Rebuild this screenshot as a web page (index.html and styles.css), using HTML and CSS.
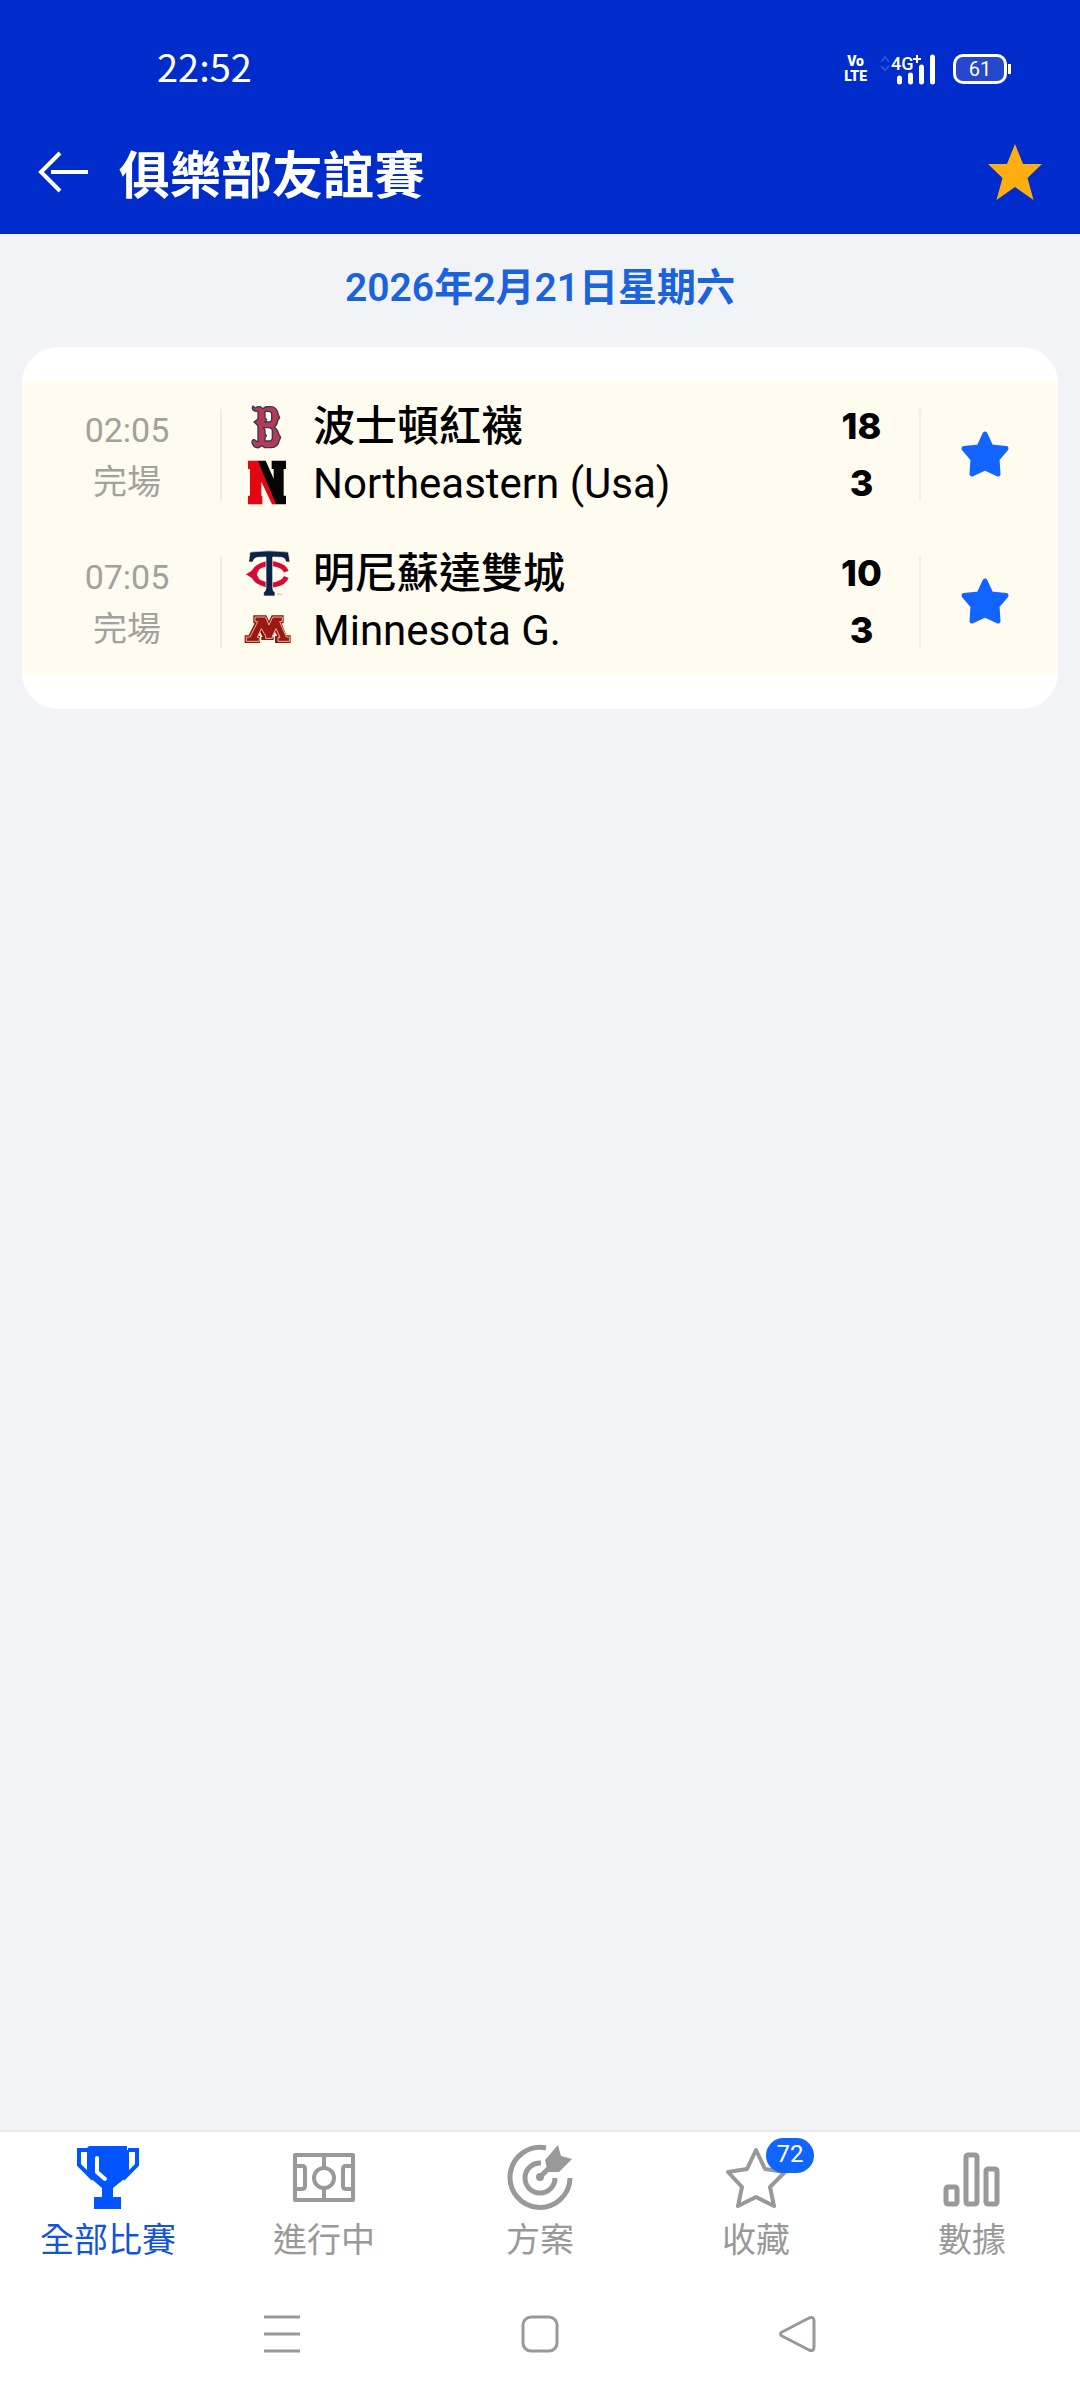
FILE: index.html
```
<!DOCTYPE html>
<html lang="zh-Hant">
<head>
    <meta charset="utf-8">
    <meta name="viewport" content="width=device-width, initial-scale=1">
    <title>俱樂部友誼賽</title>
    <link rel="stylesheet" href="styles.css">
</head>
<body>
    <header class="header">
        <div class="status-bar">
            <span class="clock">22:52</span>
            <div class="status-icons">
                <div class="volte"><span>Vo</span><span>LTE</span></div>
                <svg class="signal" width="60" height="32" viewBox="0 0 60 32">
                    <path d="M4 9l4-5 4 5M4 13l4 4 4-4" fill="none" stroke="#2a52d8" stroke-width="2"/>
                    <text x="14" y="17" class="signal-text">4G</text>
                    <path d="M36 6h8M40 2v8" stroke="#fff" stroke-width="2"/>
                    <path d="M22.500 25v4M33.500 22v7M44.500 14v15M55.500 4v25" stroke="#fff" stroke-width="5" stroke-linecap="round"/>
                </svg>
                <div class="battery">61</div>
            </div>
        </div>
        <div class="title-bar">
            <button class="icon-button" aria-label="返回">
                <svg width="52" height="44" viewBox="0 0 52 44">
                    <path d="M23 3L4 22l19 19M14 22h37" fill="none" stroke="#fff" stroke-width="4"/>
                </svg>
            </button>
            <h1>俱樂部友誼賽</h1>
            <button class="icon-button" aria-label="收藏賽事">
                <svg width="54" height="56" viewBox="0 0 54 56">
                    <path d="M27 0l8 20h19L39.500 34l6 22L27 43 8.500 56l6-22L0 20h19z" fill="#ffae12"/>
                </svg>
            </button>
        </div>
    </header>

    <main>
        <h2 class="date">2026年2月21日星期六</h2>

        <!-- 比賽列表 -->
        <div class="card">
            <div class="match">
                <div class="match-time">
                    <span>02:05</span>
                    <span>完場</span>
                </div>
                <div class="teams">
                    <div class="team">
                        <svg class="logo" viewBox="39 36 144 144">
                            <path d="M69 48c-4 6-2 14 5 15l10 1v22l-6 6-6 4 6 5 6 6v49c-5 0-7-6-12-7-6-1-7 7-5 12 3 8 10 13 19 12l10-6 8 6h20c12 0 22-8 23-20l5-11-6-10c-2-10-7-17-14-20 6-4 10-12 11-20l6-9-5-11c-1-13-10-22-22-22h-14l-9 6-8-6H84c-6 0-5 5-9 4z" fill="#b83a50" stroke="#33385c" stroke-width="4" stroke-linejoin="round"/>
                            <path d="M105 64h8c7 0 12 4 12 9v14c0 6-4 9-10 9h-10l5-7-5-6zM105 121l-4-8h13c8 0 13 4 13 10v20c0 7-5 10-12 10h-10v-10l4-6-4-6z" fill="#fffbef" stroke="#33385c" stroke-width="4"/>
                        </svg>
                        <span class="team-name">波士頓紅襪</span>
                    </div>
                    <div class="team">
                        <svg class="logo" viewBox="39 207 144 144">
                            <path d="M82 212h25l24 54v-29h-6v-25h43v25h-7v80h7v26h-32z" fill="#050505"/>
                            <path d="M54 212h29l55 131h-12L94 275v42h3v26H54v-26h6v-80h-6z" fill="#e30613"/>
                        </svg>
                        <span class="team-name">Northeastern (Usa)</span>
                    </div>
                </div>
                <div class="scores">
                    <span>18</span>
                    <span>3</span>
                </div>
                <button class="favorite" aria-label="取消收藏">
                    <svg width="50" height="50" viewBox="0 0 50 50">
                        <path d="M25 4l6 13 15 1.500L37 29l1 15-13-6-13 6 1-15-9-10.500L19 17z" fill="#1264ff" stroke="#1264ff" stroke-width="5" stroke-linejoin="round"/>
                    </svg>
                </button>
            </div>

            <div class="match">
                <div class="match-time">
                    <span>07:05</span>
                    <span>完場</span>
                </div>
                <div class="teams">
                    <div class="team">
                        <svg class="logo" viewBox="39 27 144 144">
                            <path d="M169 95A49 32 0 1 0 169 111" fill="none" stroke="#d50b35" stroke-width="15"/>
                            <path d="M48 103q18-9 32-27l6 16q-10 11 0 22l-6 16q-14-18-32-27z" fill="#d50b35"/>
                            <path d="M60 36q57-7 115 0l5 30h-12q-2-13-14-14l-26-1v93q0 10 7 13v11h-34v-11q7-3 7-13V51l-24 1q-13 1-16 14H56z" fill="#0b2347" stroke="#fffbef" stroke-width="2"/>
                            <path d="M141 161h6m-3 0v5m5 0v-5l3 3 3-3v5" fill="none" stroke="#777" stroke-width="1"/>
                        </svg>
                        <span class="team-name">明尼蘇達雙城</span>
                    </div>
                    <div class="team">
                        <svg class="logo" viewBox="39 198 144 144">
                            <path d="M70 226h39l8 17 8-17h36v24h-6l14 36h13v23h-47v-21h7l-7-13-8 16h4v9H94v-9h4l-8-16-7 13h7v21H44v-23h12l18-36h-4z" fill="#8c1212"/>
                            <path d="M75 231h32l10 24 11-24h29v14h-8l20 46h10v13h-35v-12h6l-12-26-11 22v7h-20v-7l-13-22-12 26h6v12H49v-13h11l23-46h-8z" fill="#9c1714" stroke="#e5b98b" stroke-width="3"/>
                        </svg>
                        <span class="team-name">Minnesota G.</span>
                    </div>
                </div>
                <div class="scores">
                    <span>10</span>
                    <span>3</span>
                </div>
                <button class="favorite" aria-label="取消收藏">
                    <svg width="50" height="50" viewBox="0 0 50 50">
                        <path d="M25 4l6 13 15 1.500L37 29l1 15-13-6-13 6 1-15-9-10.500L19 17z" fill="#1264ff" stroke="#1264ff" stroke-width="5" stroke-linejoin="round"/>
                    </svg>
                </button>
            </div>
        </div>
    </main>

    <footer class="footer">
        <nav class="tabs">
            <a href="#" class="tab active">
                <svg class="tab-icon" viewBox="0 0 64 64">
                    <path d="M12 4H3v15l14 14M52 4h9v15L47 33" fill="none" stroke="#0055ff" stroke-width="4"/>
                    <path d="M13 0h38v4h2v25l-16 13v9h8v12H18V51h8v-9L11 29V2z" fill="#0055ff"/>
                    <path d="M21 12v14l8 7" fill="none" stroke="#fff" stroke-width="4" stroke-linecap="round"/>
                </svg>
                <span>全部比賽</span>
            </a>
            <a href="#" class="tab">
                <svg class="tab-icon" viewBox="0 0 64 64" fill="none" stroke="#999" stroke-width="4" stroke-linejoin="round">
                    <path d="M3 9h58v45H3zM32 9v12M32 42v12M4 20h6q3 0 3 3v17q0 3-3 3H4M60 20h-6q-3 0-3 3v17q0 3 3 3h6"/>
                    <circle cx="32" cy="32" r="10"/>
                </svg>
                <span>進行中</span>
            </a>
            <a href="#" class="tab">
                <svg class="tab-icon" viewBox="0 0 64 64">
                    <path d="M38 2a30 30 0 1 0 24 30M33 17a15 15 0 1 0 14 15M31 32l17-17" fill="none" stroke="#999" stroke-width="5"/>
                    <circle cx="32" cy="31" r="4" fill="#999"/>
                    <path d="M37 14L50-1l3 11 11 3-13 13H40z" fill="#999"/>
                </svg>
                <span>方案</span>
            </a>
            <a href="#" class="tab">
                <div class="tab-badge">
                    <svg class="tab-icon" viewBox="0 0 64 64">
                        <path d="M32 4l9 19 20 3-15 15 4 19-18-9-18 9 4-19L4 26l19-3z" fill="none" stroke="#999" stroke-width="4" stroke-linejoin="round"/>
                    </svg>
                    <span class="badge">72</span>
                </div>
                <span>收藏</span>
            </a>
            <a href="#" class="tab">
                <svg class="tab-icon" viewBox="0 0 64 64" fill="none" stroke="#999" stroke-width="5">
                    <rect x="6" y="41" width="11" height="17" rx="2"/>
                    <rect x="26" y="9" width="11" height="49" rx="2"/>
                    <rect x="46" y="23" width="11" height="35" rx="2"/>
                </svg>
                <span>數據</span>
            </a>
        </nav>

        <div class="system-bar">
            <button class="icon-button" aria-label="選單">
                <svg width="40" height="40" viewBox="0 0 40 40" fill="none" stroke="#999" stroke-width="3">
                    <path d="M2 3h36M2 20h36M2 37h36"/>
                </svg>
            </button>
            <button class="icon-button" aria-label="主頁">
                <svg width="40" height="40" viewBox="0 0 40 40" fill="none" stroke="#999" stroke-width="3">
                    <rect x="3" y="3" width="34" height="34" rx="8"/>
                </svg>
            </button>
            <button class="icon-button" aria-label="上一頁">
                <svg width="40" height="40" viewBox="0 0 40 40" fill="none" stroke="#999" stroke-width="3">
                    <path d="M4 18L31 4q5-2 5 3v26q0 5-5 3L4 22q-3-2 0-4z"/>
                </svg>
            </button>
        </div>
    </footer>
</body>
</html>
```
FILE: styles.css
```
* {
    box-sizing: border-box;
}

body {
    background-color: #f2f3f7;
    color: #000000;
    font-family: Roboto, "Noto Sans CJK TC", sans-serif;
    margin: 0;
    min-height: 100vh;
    display: flex;
    flex-direction: column;
}

main {
    flex: 1;
}

button {
    background: none;
    border: none;
    padding: 0;
    cursor: pointer;
}

svg {
    display: block;
}

.icon-button {
    display: flex;
}

/* 頂部 */
.header {
    background-color: #002ccb;
    color: #ffffff;
}

.status-bar {
    display: flex;
    justify-content: space-between;
    align-items: center;
    height: 112px;
    padding: 26px 73px 0 157px;
}

.clock {
    padding-bottom: 6px;
    font-family: "Noto Sans CJK TC", sans-serif;
    font-size: 38px;
    line-height: 40px;
}

.status-icons {
    display: flex;
    align-items: center;
}

.volte {
    display: flex;
    flex-direction: column;
    align-items: center;
    margin-right: 10px;
    font-size: 14px;
    font-weight: 900;
    line-height: 15px;
}

.signal {
    margin-right: 16px;
}

.signal-text {
    fill: #ffffff;
    font-size: 18px;
    font-weight: 500;
}

.battery {
    position: relative;
    width: 54px;
    height: 30px;
    border: 3px solid #ffffff;
    border-radius: 10px;
    background-color: #2548cc;
    font-size: 20px;
    line-height: 24px;
    text-align: center;
}

.battery::after {
    content: "";
    position: absolute;
    top: 7px;
    right: -7px;
    width: 3px;
    height: 10px;
    background-color: #ffffff;
}

.title-bar {
    display: flex;
    align-items: center;
    height: 122px;
    padding: 0 38px 2px 37px;
}

.title-bar h1 {
    flex: 1;
    margin: 0;
    padding: 10px 0 0 30px;
    font-size: 51px;
    font-weight: 700;
    line-height: 60px;
}

.date {
    margin: 0;
    padding: 24px 0 29px;
    color: #1a63dc;
    font-size: 39px;
    font-weight: 600;
    line-height: 60px;
    text-align: center;
}

/* 比賽卡片 */
.card {
    margin: 0 22px;
    padding: 34px 0;
    background-color: #ffffff;
    border-radius: 36px;
}

.match {
    display: flex;
    align-items: center;
    height: 147px;
    background-color: #fffbef;
}

.match-time {
    display: flex;
    flex-direction: column;
    justify-content: center;
    align-items: center;
    width: 200px;
    height: 92px;
    padding: 2px 0 0 12px;
    border-right: 2px solid #efece3;
    color: #a3a19b;
    font-size: 34px;
    line-height: 52px;
}

.teams {
    flex: 1;
    padding-left: 21px;
}

.team {
    display: flex;
    align-items: center;
    gap: 22px;
    height: 57px;
}

.logo {
    width: 48px;
    height: 48px;
}

.team-name {
    font-size: 42px;
    line-height: 57px;
}

.team:first-child .team-name {
    font-weight: 500;
}

.scores {
    display: flex;
    flex-direction: column;
    justify-content: center;
    width: 117px;
    height: 92px;
    border-right: 2px solid #f3f0e7;
    font-family: Inter, sans-serif;
    font-size: 36px;
    font-weight: 800;
    line-height: 57px;
    text-align: center;
}

.favorite {
    display: flex;
    justify-content: center;
    width: 137px;
    padding-right: 10px;
}

/* 底部選單 */
.footer {
    background-color: #ffffff;
    border-top: 2px solid #e9e9eb;
}

.tabs {
    display: flex;
    padding-top: 14px;
}

.tab {
    flex: 1;
    display: flex;
    flex-direction: column;
    align-items: center;
    gap: 2px;
    color: #999999;
    font-family: "Noto Sans CJK TC", sans-serif;
    font-size: 34px;
    font-weight: 400;
    line-height: 52px;
    text-decoration: none;
}

.active {
    color: #1254dc;
}

.tab-icon {
    width: 64px;
    height: 64px;
    overflow: visible;
}

.tab-badge {
    position: relative;
}

.badge {
    position: absolute;
    top: -8px;
    left: 42px;
    width: 48px;
    height: 35px;
    border-radius: 18px;
    background-color: #1264ff;
    color: #ffffff;
    font-family: Roboto, sans-serif;
    font-size: 24px;
    font-weight: 400;
    line-height: 33px;
    text-align: center;
}

.system-bar {
    display: flex;
    justify-content: center;
    gap: 218px;
    padding: 50px 0 46px;
}
```
